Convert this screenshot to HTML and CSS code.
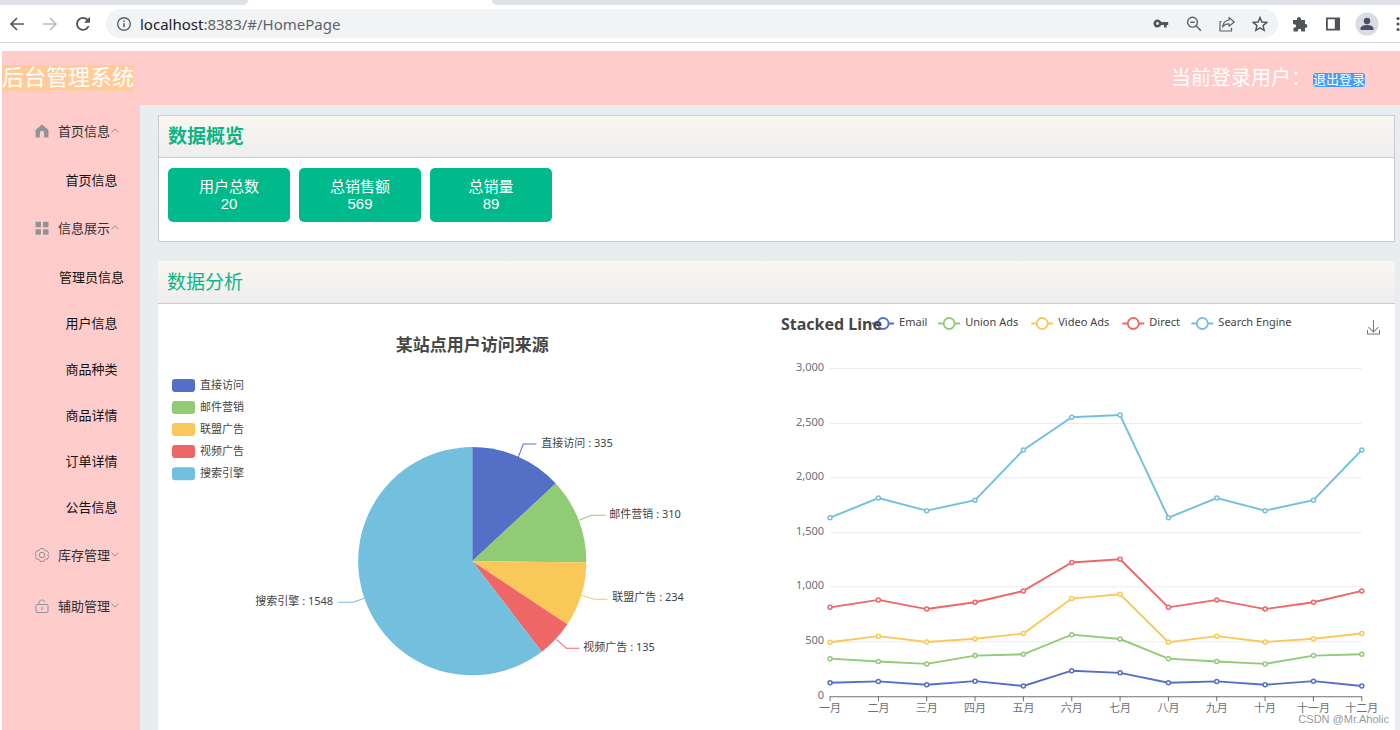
FILE: index.html
```html
<!DOCTYPE html>
<html lang="zh-CN">
<head>
<meta charset="utf-8">
<meta name="viewport" content="width=device-width, initial-scale=1">
<title>后台管理系统</title>
<link rel="stylesheet" href="styles.css">
</head>
<body>
<div class="browser">
  <div class="tabstrip"><div class="tab-bg"></div><div class="tab-active"></div><div class="tab-bg tab-rest"></div></div>
  <div class="toolbar">
    <button class="tool" aria-label="后退"><svg width="16" height="16" viewBox="0 0 16 16"><path d="M15 8H2M8 2L2 8l6 6" fill="none" stroke="#55585c" stroke-width="1.7"/></svg></button>
    <button class="tool" aria-label="前进"><svg width="16" height="16" viewBox="0 0 16 16"><path d="M1 8h13M8 2l6 6-6 6" fill="none" stroke="#b8babd" stroke-width="1.5"/></svg></button>
    <button class="tool" aria-label="刷新"><svg width="18" height="18" viewBox="0 0 18 18"><path d="M14.6 11a6 6 0 1 1-1.2-6.2L15 6.4" fill="none" stroke="#505357" stroke-width="1.8"/><path d="M16 1.8v6h-6z" fill="#505357"/></svg></button>
    <div class="address">
      <svg width="16" height="16" viewBox="0 0 16 16"><circle cx="8" cy="8" r="6.3" fill="none" stroke="#5f6368" stroke-width="1.4"/><path d="M8 7.2v4M8 4.4v1.5" stroke="#5f6368" stroke-width="1.6"/></svg>
      <span class="url"><b>localhost</b>:8383/#/HomePage</span>
      <div class="address-tools">
        <button class="tool" aria-label="密码"><svg width="16" height="16" viewBox="0 0 16 16"><path fill-rule="evenodd" d="M8.2 6A4 4 0 1 0 8.200 9H11V11.500h2.600V9h1.600V6zM4.500 6.100a1.400 1.400 0 1 1 0 2.800 1.400 1.400 0 0 1 0-2.800z" fill="#505357"/></svg></button>
        <button class="tool" aria-label="缩放"><svg width="16" height="16" viewBox="0 0 16 16"><circle cx="6.5" cy="6.2" r="4.9" fill="none" stroke="#5f6368" stroke-width="1.4"/><path d="M10 9.8l4.8 4.8M4.3 6.2h4.4" stroke="#5f6368" stroke-width="1.5"/></svg></button>
        <button class="tool" aria-label="分享"><svg width="16" height="16" viewBox="0 0 16 16"><path d="M2.5 5.5H1V15h11.5v-3.2M10 1.5L15.2 6 10 10.2V7.8C7 7.8 5 8.8 3.5 11c.5-3.700 2.700-6.500 6.500-7z" fill="none" stroke="#5f6368" stroke-width="1.2" stroke-linejoin="round"/></svg></button>
        <button class="tool" aria-label="收藏"><svg width="16" height="16" viewBox="0 0 16 16"><path d="M8 1.500l1.900 4.500 4.900.4-3.700 3.200 1.100 4.800L8 11.900l-4.200 2.500 1.100-4.800L1.200 6.400l4.900-.4z" fill="none" stroke="#505357" stroke-width="1.4"/></svg></button>
      </div>
    </div>
    <div class="extras">
      <button class="tool" aria-label="扩展程序"><svg width="16" height="16" viewBox="0 0 16 16"><path d="M1 4h4V3a2 2 0 0 1 4 0v1h4v4h.500a1.900 1.900 0 0 1 0 3.800H13V15.500H9.300V14.500a1.700 1.700 0 0 0-3.400 0v1H1.500V11.800h.800a1.800 1.800 0 0 0 0-3.600H1z" fill="#505357"/></svg></button>
      <button class="tool" aria-label="侧边栏"><svg width="16" height="16" viewBox="0 0 16 16"><path fill-rule="evenodd" d="M1 1.500h14v13H1zM2.800 3.300v9.400h7V3.300z" fill="#505357"/></svg></button>
      <button class="tool avatar" aria-label="用户"><svg width="24" height="24" viewBox="0 0 24 24"><circle cx="12" cy="12" r="11.500" fill="#dadce3"/><circle cx="12" cy="9" r="3.200" fill="#4a4e69"/><path d="M5.500 18v-1.500c0-2.300 4-3.400 6.500-3.400s6.500 1.100 6.500 3.400V18z" fill="#4a4e69"/></svg></button>
      <button class="tool more" aria-label="更多"><svg width="4" height="16" viewBox="0 0 4 16"><g fill="#505357"><circle cx="2" cy="2.500" r="1.600"/><circle cx="2" cy="8" r="1.600"/><circle cx="2" cy="13.500" r="1.600"/></g></svg></button>
    </div>
  </div>
</div>

<div class="app">
  <header class="topbar">
    <h1 class="brand"><mark>后台管理系统</mark></h1>
    <div class="user"><span>当前登录用户：</span><button class="logout">退出登录</button></div>
  </header>
  <div class="body">
    <nav class="sidebar">
      <button class="group"><svg width="14" height="14" viewBox="0 0 14 14"><path d="M7 .6L.6 6v7.400h4.200V9a2.200 2.200 0 0 1 4.400 0v4.400h4.200V6z" fill="#8f9296"/></svg><span>首页信息</span><svg class="caret" width="8" height="5" viewBox="0 0 8 5"><path d="M.5 4.300L4 .9l3.500 3.400"/></svg></button>
      <a class="item" href="#home">首页信息</a>
      <button class="group"><svg width="14" height="14" viewBox="0 0 14 14"><g fill="#8f9296"><rect x=".5" y=".8" width="5.500" height="5.500" rx=".6"/><rect x="8" y=".8" width="5.500" height="5.500" rx=".6"/><rect x=".5" y="8.200" width="5.500" height="5.500" rx=".6"/><rect x="8" y="8.200" width="5.500" height="5.500" rx=".6"/></g></svg><span>信息展示</span><svg class="caret" width="8" height="5" viewBox="0 0 8 5"><path d="M.5 4.300L4 .9l3.500 3.400"/></svg></button>
      <a class="item" href="#admin">管理员信息</a>
      <a class="item" href="#user">用户信息</a>
      <a class="item" href="#category">商品种类</a>
      <a class="item" href="#goods">商品详情</a>
      <a class="item" href="#order">订单详情</a>
      <a class="item" href="#notice">公告信息</a>
      <button class="group"><svg width="14" height="14" viewBox="0 0 14 14"><g fill="none" stroke="#8f9296"><path d="M5.200.6h3.600l.7 1.700 1 .6 1.800-.2 1.500 2.700-1.100 1.600 1.100 1.600-1.500 2.700-1.800-.2-1 .6-.7 1.700H5.200l-.7-1.700-1-.6-1.800.2L.2 8.600 1.300 7 .2 5.400l1.500-2.700 1.800.2 1-.6z"/><circle cx="7" cy="7" r="2.700"/></g></svg><span>库存管理</span><svg class="caret" width="8" height="5" viewBox="0 0 8 5"><path d="M.5.7L4 4.100 7.500.7"/></svg></button>
      <button class="group"><svg width="14" height="14" viewBox="0 0 14 14"><g fill="none" stroke="#8f9296"><rect x="1" y="5.500" width="12" height="8" rx="1"/><path d="M3.800 5.500V4a3.200 3.200 0 0 1 6.200-1M7 8v3"/></g></svg><span>辅助管理</span><svg class="caret" width="8" height="5" viewBox="0 0 8 5"><path d="M.5.7L4 4.100 7.500.7"/></svg></button>
    </nav>
    <main class="content">
      <section class="panel bordered">
        <h2 class="panel-title strong">数据概览</h2>
        <div class="stats">
          <div class="stat"><span>用户总数</span><span>20</span></div>
          <div class="stat"><span>总销售额</span><span>569</span></div>
          <div class="stat"><span>总销量</span><span>89</span></div>
        </div>
      </section>
      <section class="panel">
        <h2 class="panel-title">数据分析</h2>
        <div class="charts">
          <svg class="chart" id="pie" viewBox="0 0 618 428" role="img" aria-label="某站点用户访问来源"></svg>
          <svg class="chart" id="line" viewBox="0 0 618 428" role="img" aria-label="Stacked Line"></svg>
        </div>
      </section>
    </main>
  </div>
</div>
<div class="credit">CSDN @Mr.Aholic</div>
<script src="charts.js"></script>
</body>
</html>
```
FILE: styles.css
```css
* { box-sizing: border-box; }
body {
  margin: 0;
  height: 100vh;
  overflow: hidden;
  display: flex;
  flex-direction: column;
  background: #fff;
  font-family: "Liberation Sans", "Noto Sans CJK SC", sans-serif;
}
button { border: 0; padding: 0; background: none; font: inherit; color: inherit; cursor: pointer; }
h1, h2 { margin: 0; font-weight: 400; }
svg { display: block; flex: none; }

.browser { flex: none; border-bottom: 1px solid #d5d7da; margin-bottom: 8px; }
.tabstrip { display: flex; height: 5px; background: #fff; }
.tab-bg { width: 248px; background: #dee1e6; border-bottom-right-radius: 6px; }
.tab-active { width: 244px; }
.tab-rest { flex: 1; border-radius: 0 0 0 6px; }
.toolbar { display: flex; align-items: center; height: 37px; padding-left: 8px; gap: 16px; overflow: hidden; }
.tool { display: grid; place-items: center; width: 17px; height: 24px; flex: none; }
.address {
  flex: 1;
  display: flex;
  align-items: center;
  gap: 8px;
  height: 29px;
  margin-left: -1px;
  margin-right: -3px;
  padding: 0 10px;
  border-radius: 15px;
  background: #f1f3f4;
}
.url { font: 15px/20px "Noto Sans", "Noto Sans CJK SC", sans-serif; color: #5f6368; }
.url b { font-weight: 400; color: #202124; }
.address-tools { display: flex; gap: 16px; margin-left: auto; }
.extras { display: flex; align-items: center; gap: 16px; }
.avatar { width: 24px; margin: 0 1px 0 -2px; }
.more { width: 4px; }

.app { flex: 1; min-height: 0; display: flex; flex-direction: column; margin-left: 2px; }
.topbar {
  display: flex;
  align-items: center;
  justify-content: space-between;
  flex: none;
  height: 54px;
  padding-right: 35px;
  background: #fcc;
  color: #fff;
}
.brand { font-size: 22px; line-height: 26px; }
.brand mark { display: block; background: #fc9; color: #fff; }
.user { display: flex; align-items: center; font-size: 20px; line-height: 24px; }
.logout {
  margin: 4px 0 0 2px;
  border-radius: 3px;
  background: #409eff;
  font-size: 13px;
  line-height: 14px;
}

.body { flex: 1; min-height: 0; display: flex; }
.sidebar { flex: none; width: 138px; background: #fcc; font-size: 13px; }
.group {
  display: flex;
  align-items: center;
  width: 100%;
  height: 51px;
  padding-left: 33px;
  color: #303133;
}
.group span { margin: 0 1px 0 9px; }
.caret path { fill: none; stroke: #8f9296; stroke-width: 1; }
.item {
  display: flex;
  align-items: center;
  justify-content: center;
  height: 46px;
  padding-left: 41px;
  color: #111;
  text-decoration: none;
}

.content {
  flex: 1;
  min-width: 0;
  display: flex;
  flex-direction: column;
  gap: 19px;
  padding: 10px 5px 0 18px;
  background: #e8edf0;
}
.panel { flex: none; background: #fff; }
.bordered { border: 1px solid #ccc; }
.panel-title {
  padding: 1px 9px 0;
  border-bottom: 1px solid #ccc;
  background: linear-gradient(#faf7f2, #eee);
  color: #0cb586;
  font-size: 19px;
  line-height: 41px;
}
.strong { font-weight: 700; line-height: 40px; }
.stats { display: flex; gap: 9px; padding: 10px 9px 19px; }
.stat {
  display: flex;
  flex-direction: column;
  align-items: center;
  width: 122px;
  padding: 10px 0;
  border-radius: 5px;
  background: #00ba8b;
  color: #fff;
  font-size: 15px;
  line-height: 17px;
}

.charts { display: grid; grid-template-columns: 1fr 1fr; }
.chart { width: 100%; height: auto; font: 11px "Noto Sans", "Noto Sans CJK SC", sans-serif; fill: #444; }
.chart .title { font-size: 17px; font-weight: 700; fill: #464646; }
.chart .title-en { font-size: 16px; font-weight: 700; fill: #464646; }
.chart .axis { fill: #6e7079; }
.end { text-anchor: end; }
.mid { text-anchor: middle; }

.credit {
  position: absolute;
  right: 11px;
  bottom: 4px;
  color: #999;
  font-size: 11px;
  line-height: 14px;
}
```
FILE: charts.js
```js
const COLORS = ['#5470c6', '#91cc75', '#fac858', '#ee6666', '#73c0de'];

function add(parent, tag, attrs, text) {
  const el = document.createElementNS('http://www.w3.org/2000/svg', tag);
  for (const key in attrs) el.setAttribute(key, attrs[key]);
  if (text !== undefined) el.textContent = text;
  parent.appendChild(el);
  return el;
}

function drawPie(svg) {
  const cx = 314, cy = 257, r = 114;
  const data = [
    { name: '直接访问', value: 335, leader: '360,153 365,140 378,140', x: 383, y: 143 },
    { name: '邮件营销', value: 310, leader: '421,216 433,211 447,211', x: 451, y: 214 },
    { name: '联盟广告', value: 234, leader: '423,291 436,295 449,295', x: 454, y: 297 },
    { name: '视频广告', value: 135, leader: '398,335 408,344 421,344', x: 425, y: 347 },
    { name: '搜索引擎', value: 1548, leader: '206,294 195,298 180,298', x: 175, y: 301, anchor: 'end' }
  ];
  add(svg, 'text', { x: 314, y: 47, class: 'title mid' }, '某站点用户访问来源');
  const total = data.reduce((sum, d) => sum + d.value, 0);
  let angle = 0;
  data.forEach((d, i) => {
    const next = angle + d.value / total * Math.PI * 2;
    const point = a => (cx + r * Math.sin(a)) + ',' + (cy - r * Math.cos(a));
    const large = next - angle > Math.PI ? 1 : 0;
    add(svg, 'path', { d: `M${cx},${cy}L${point(angle)}A${r},${r} 0 ${large} 1 ${point(next)}Z`, fill: COLORS[i] });
    add(svg, 'polyline', { points: d.leader, fill: 'none', stroke: COLORS[i] });
    add(svg, 'text', { x: d.x, y: d.y, class: d.anchor || '' }, `${d.name} : ${d.value}`);
    add(svg, 'rect', { x: 14, y: 75 + 22 * i, width: 23, height: 13, rx: 3, fill: COLORS[i] });
    add(svg, 'text', { x: 42, y: 85 + 22 * i }, d.name);
    angle = next;
  });
}

function drawLines(svg) {
  const left = 53, step = 48.3, base = 391.5, scale = 327.5 / 3000;
  const months = ['一月', '二月', '三月', '四月', '五月', '六月', '七月', '八月', '九月', '十月', '十一月', '十二月'];
  const series = [
    { name: 'Email', x: 95, data: [120, 132, 101, 134, 90, 230, 210] },
    { name: 'Union Ads', x: 161, data: [220, 182, 191, 234, 290, 330, 310] },
    { name: 'Video Ads', x: 254, data: [150, 232, 201, 154, 190, 330, 410] },
    { name: 'Direct', x: 345, data: [320, 332, 301, 334, 390, 330, 320] },
    { name: 'Search Engine', x: 414, data: [820, 932, 901, 934, 1290, 1330, 1320] }
  ];
  const right = left + step * 11;
  for (let v = 0; v <= 3000; v += 500) {
    const y = Math.round(base - v * scale) + 0.5;
    if (v) add(svg, 'path', { d: `M${left},${y}H${right}`, stroke: '#e8ebf2' });
    add(svg, 'text', { x: 47, y: y + 2.5, class: 'axis end' }, v.toLocaleString('en-US'));
  }
  add(svg, 'path', { d: `M${left},392.5H${right}`, stroke: '#6e7079' });
  months.forEach((name, i) => {
    const x = left + step * i;
    add(svg, 'path', { d: `M${x},392v5`, stroke: '#6e7079' });
    add(svg, 'text', { x, y: 408, class: 'axis mid' }, name);
  });
  const stack = months.map(() => 0);
  series.forEach((s, k) => {
    const color = COLORS[k];
    const points = months.map((m, i) => {
      stack[i] += s.data[i % 7];
      return [left + step * i, base - stack[i] * scale];
    });
    add(svg, 'polyline', { points: points.join(' '), fill: 'none', stroke: color, 'stroke-width': 1.9 });
    points.forEach(p => add(svg, 'circle', { cx: p[0], cy: p[1], r: 2, fill: '#fff', stroke: color, 'stroke-width': 1.5 }));
    add(svg, 'path', { d: `M${s.x},19.500h22`, stroke: color, 'stroke-width': 2 });
    add(svg, 'circle', { cx: s.x + 11, cy: 19.5, r: 5.5, fill: '#fff', stroke: color, 'stroke-width': 1.8 });
    add(svg, 'text', { x: s.x + 27, y: 22 }, s.name);
  });
  add(svg, 'text', { x: 4, y: 26, class: 'title-en' }, 'Stacked Line');
  add(svg, 'path', { d: 'M596,16v12M591,23l5,5l5,-5M590,26v4h12v-4', fill: 'none', stroke: '#777' });
}

drawPie(document.getElementById('pie'));
drawLines(document.getElementById('line'));
```
